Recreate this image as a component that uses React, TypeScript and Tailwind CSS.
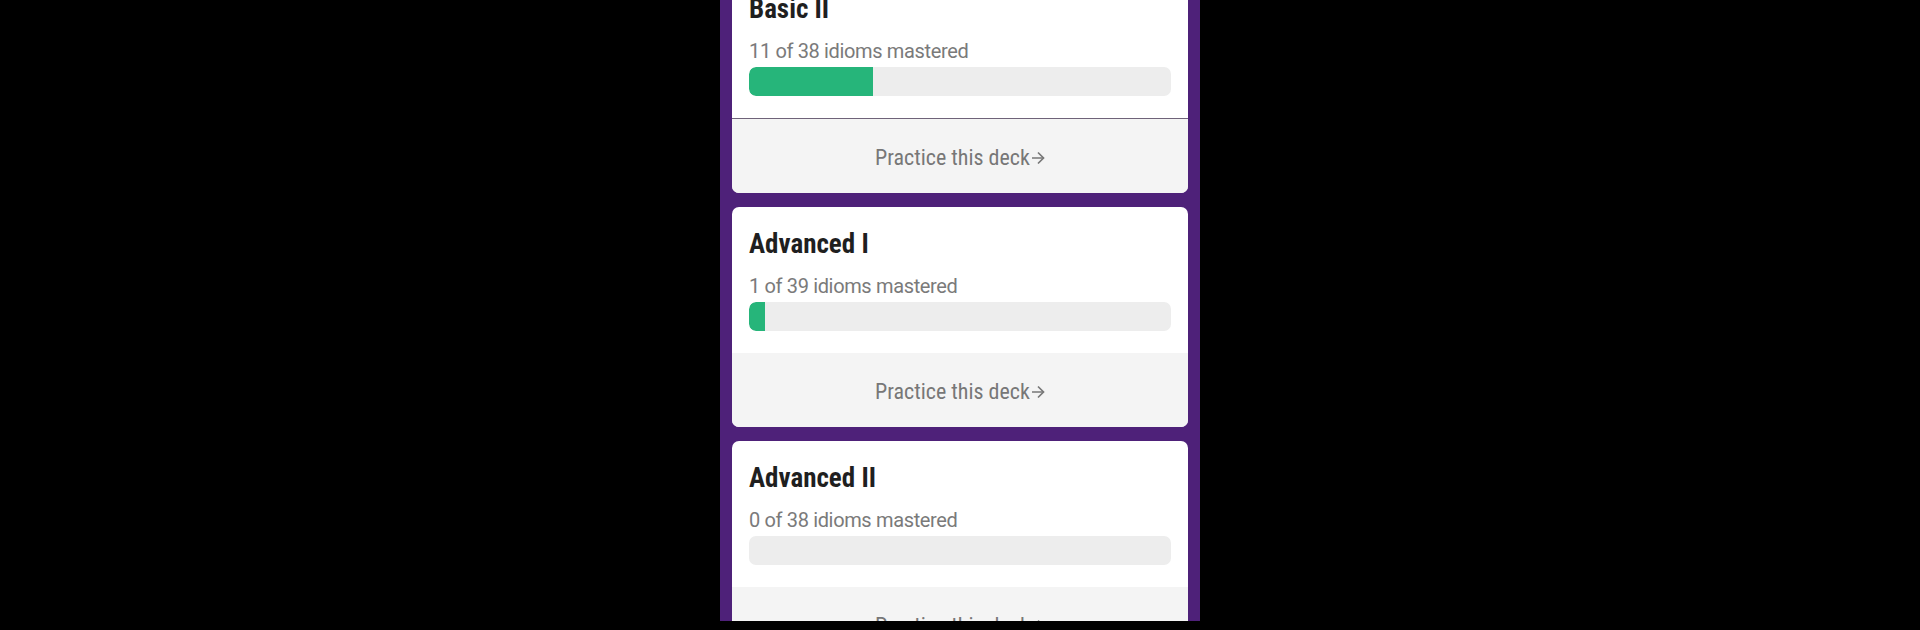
import React from 'react';

type Deck = {
  name: string;
  done: number;
  total: number;
  bar: number;
  divider?: boolean;
};

const decks: Deck[] = [
  { name: 'Basic II', done: 11, total: 38, bar: 124, divider: true },
  { name: 'Advanced I', done: 1, total: 39, bar: 16 },
  { name: 'Advanced II', done: 0, total: 38, bar: 0 },
];

const Arrow = () => (
  <svg width="14" height="16" viewBox="0 0 14 16" fill="none" stroke="#777777" strokeWidth="1.7" className="ml-[1px]">
    <path d="M1 8h11.5" />
    <path d="M7 2.5 12.5 8 7 13.5" />
  </svg>
);

const DeckCard = ({ deck }: { deck: Deck }) => {
  return (
    <div className="bg-white rounded-[7px] overflow-hidden shrink-0">
      <div className="px-[17px] pt-[21px] pb-[22px]">
        {/* Deck title */}
        <h2
          className="text-[27px] leading-[32px] font-bold text-[#1f1f1f]"
          style={{ fontFamily: '"Roboto Condensed", "Liberation Sans Narrow", Roboto, sans-serif' }}
        >
          {deck.name}
        </h2>
        <p className="mt-[12px] text-[20px] leading-[28px] tracking-[-0.35px] text-[#7a7a7a] font-['Roboto',sans-serif]">
          {deck.done} of {deck.total} idioms mastered
        </p>
        {/* Progress */}
        <div className="mt-[2px] h-[29px] rounded-[7px] bg-[#ededed] overflow-hidden">
          <div className="h-full bg-[#26b57a] rounded-l-[7px]" style={{ width: deck.bar }} />
        </div>
      </div>

      {/* Footer link */}
      <div
        className={
          deck.divider
            ? 'h-[75px] pt-[3px] bg-[#f4f4f4] border-t border-[#6f6379] flex items-center justify-center'
            : 'h-[74px] pt-[3px] bg-[#f4f4f4] flex items-center justify-center'
        }
      >
        <span
          className="flex items-center text-[22px] leading-[28px] text-[#777777]"
          style={{ fontFamily: '"Roboto Condensed", Roboto, sans-serif' }}
        >
          Practice this deck
          <Arrow />
        </span>
      </div>
    </div>
  );
};

export default function App() {
  return (
    <div className="w-[1920px] h-[630px] bg-black flex justify-center overflow-hidden">
      <div className="w-[480px] h-[621px] bg-[#4e2179] overflow-hidden">
        <div className="flex flex-col gap-[14px] px-[12px] -mt-[28px]">
          {decks.map((d) => (
            <DeckCard key={d.name} deck={d} />
          ))}
        </div>
      </div>
    </div>
  );
}
